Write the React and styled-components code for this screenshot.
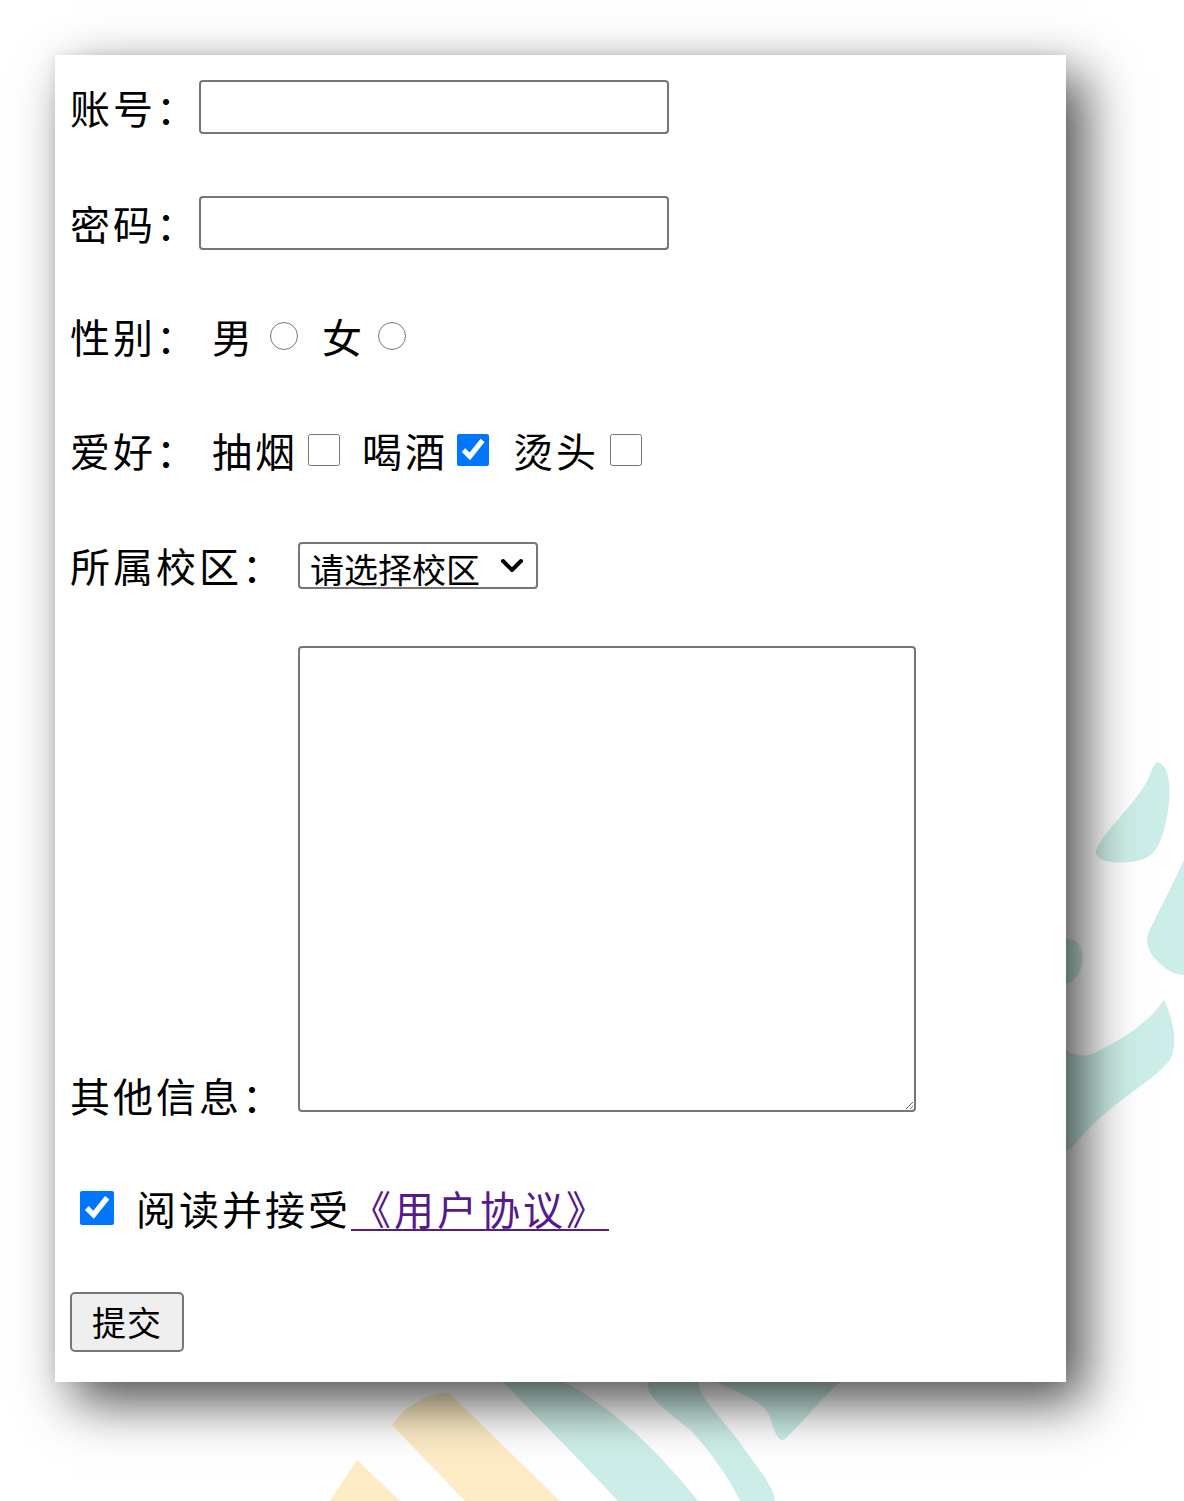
import styled, { createGlobalStyle } from "styled-components";

const GlobalStyle = createGlobalStyle`
  html, body {
    margin: 0;
    padding: 0;
    background: #ffffff;
  }
  body {
    font-family: "Noto Sans CJK SC", "Noto Sans", sans-serif;
    color: #000;
  }
`;

const Page = styled.div`
  position: relative;
  width: 1184px;
  height: 1501px;
  overflow: hidden;
  background: #fff;
`;

// decorative swooshes behind the card
const Watermark = styled.svg`
  position: absolute;
  left: 0;
  top: 0;
  width: 1184px;
  height: 1501px;
  z-index: 0;
`;

const Card = styled.form`
  position: relative;
  z-index: 1;
  margin: 55px 0 0 55px;
  width: 1011px;
  box-sizing: border-box;
  padding: 22px 0 30px 15px;
  background: #fff;
  box-shadow: 18px 20px 50px rgba(0, 0, 0, 0.7), -2px -2px 8px rgba(0, 0, 0, 0.06);
`;

const Row = styled.div`
  display: flex;
  align-items: center;
  height: 60px;
  margin-top: ${({ $mt }) => $mt || 0}px;
  font-size: 40px;
  line-height: 60px;
  letter-spacing: 3px;
`;

const BlockRow = styled.div`
  margin-top: ${({ $mt }) => $mt || 0}px;
  font-size: 40px;
  line-height: 50px;
  letter-spacing: 3px;
`;

const Label = styled.span`
  white-space: nowrap;
`;

const Option = styled.span`
  margin-left: ${({ $ml }) => $ml || 0}px;
  white-space: nowrap;
`;

const TextInput = styled.input`
  box-sizing: border-box;
  width: 470px;
  height: 54px;
  margin: 0 0 0 ${({ $ml }) => $ml || 0}px;
  border: 2px solid #767676;
  border-radius: 4px;
  font-size: 32px;
  padding: 2px 6px;
`;

const Radio = styled.input`
  width: 28px;
  height: 28px;
  margin: 0 0 0 ${({ $ml }) => $ml || 0}px;
`;

const Check = styled.input`
  width: ${({ $size }) => $size || 32}px;
  height: ${({ $size }) => $size || 32}px;
  margin: 0 0 0 ${({ $ml }) => $ml || 0}px;
  accent-color: #0075ff;
`;

const SelectWrap = styled.span`
  position: relative;
  display: inline-flex;
  margin-left: 13px;
`;

const Select = styled.select`
  box-sizing: border-box;
  width: 240px;
  height: 47px;
  border: 2px solid #767676;
  border-radius: 4px;
  background: #fff;
  appearance: none;
  font-family: "Noto Sans CJK SC", sans-serif;
  font-size: 34px;
  letter-spacing: 0;
  color: #000;
  padding: 0 40px 0 10px;
`;

const Chevron = styled.svg`
  position: absolute;
  right: 14px;
  top: 16px;
  width: 24px;
  height: 16px;
  pointer-events: none;
`;

const TextArea = styled.textarea`
  box-sizing: border-box;
  width: 618px;
  height: 466px;
  margin: 0 0 0 13px;
  border: 2px solid #767676;
  border-radius: 4px;
  vertical-align: baseline;
  font-size: 32px;
`;

const AgreeText = styled.span`
  margin-left: 22px;
  white-space: nowrap;
`;

const Link = styled.a`
  color: #551a8b;
  text-decoration: underline;
  text-underline-offset: 4px;
  text-decoration-thickness: 2px;
`;

const Submit = styled.button`
  box-sizing: border-box;
  width: 114px;
  height: 60px;
  padding: 0;
  border: 2px solid #767676;
  border-radius: 5px;
  background: #efefef;
  font-family: "Noto Sans CJK SC", sans-serif;
  font-size: 34px;
  letter-spacing: 1px;
  line-height: 1;
  color: #000;
`;

const Swooshes = () => (
  <Watermark viewBox="0 0 1184 1501">
    {/* right side */}
    <path
      d="M1160 763 C1172 770 1172 800 1164 830 C1158 852 1150 860 1130 862 C1110 864 1094 860 1096 850 C1104 830 1140 800 1150 775 C1153 766 1156 760 1160 763 Z"
      fill="#cdeee8"
    />
    <path
      d="M1184 860 C1175 880 1162 905 1152 925 C1146 935 1145 945 1152 955 C1162 968 1174 975 1184 975 Z"
      fill="#cdeee8"
    />
    <path
      d="M1164 1000 C1174 1020 1178 1045 1170 1060 C1150 1085 1110 1100 1070 1150 L1060 1150 L1060 1045 C1070 1055 1085 1060 1100 1050 C1130 1035 1150 1020 1164 1000 Z"
      fill="#cdeee8"
    />
    <path d="M1060 940 C1075 935 1085 945 1082 965 C1078 980 1068 985 1060 985 Z" fill="#cdeee8" />
    {/* bottom */}
    <path
      d="M392 1425 C405 1405 430 1392 449 1393 L560 1501 L465 1501 Z"
      fill="#fdecc6"
    />
    <path d="M357 1460 L400 1501 L330 1501 Z" fill="#fdecc6" />
    <path
      d="M503 1382 L564 1382 C600 1400 650 1440 698 1501 L618 1501 C580 1460 540 1420 503 1382 Z"
      fill="#cdeee8"
    />
    <path
      d="M648 1382 L698 1382 C700 1400 725 1420 745 1450 C760 1470 775 1490 775 1501 L740 1501 C730 1480 710 1450 690 1430 C660 1405 645 1395 648 1382 Z"
      fill="#cdeee8"
    />
    <path
      d="M717 1382 L840 1382 C820 1400 800 1425 786 1438 C778 1445 774 1430 770 1418 C765 1400 740 1395 717 1382 Z"
      fill="#cdeee8"
    />
  </Watermark>
);

export default function App() {
  return (
    <Page>
      <GlobalStyle />
      <Swooshes />
      <Card onSubmit={(e) => e.preventDefault()}>
        <Row>
          <Label>账号：</Label>
          <TextInput type="text" />
        </Row>

        <Row $mt={56}>
          <Label>密码：</Label>
          <TextInput type="password" />
        </Row>

        <Row $mt={53}>
          <Label>性别：</Label>
          <Option $ml={13}>男</Option>
          <Radio type="radio" name="sex" $ml={15} />
          <Option $ml={24}>女</Option>
          <Radio type="radio" name="sex" $ml={13} />
        </Row>

        <Row $mt={54}>
          <Label>爱好：</Label>
          <Option $ml={13}>抽烟</Option>
          <Check type="checkbox" $ml={10} />
          <Option $ml={22}>喝酒</Option>
          <Check type="checkbox" defaultChecked $ml={9} />
          <Option $ml={24}>烫头</Option>
          <Check type="checkbox" $ml={11} />
        </Row>

        <Row $mt={55}>
          <Label>所属校区：</Label>
          <SelectWrap>
            <Select defaultValue="">
              <option value="">请选择校区</option>
              <option value="a">北京校区</option>
              <option value="b">上海校区</option>
            </Select>
            <Chevron viewBox="0 0 24 16">
              <path d="M3 3 L12 12 L21 3" fill="none" stroke="#000" strokeWidth="4" strokeLinecap="round" strokeLinejoin="round" />
            </Chevron>
          </SelectWrap>
        </Row>

        <BlockRow $mt={51}>
          <Label>其他信息：</Label>
          <TextArea />
        </BlockRow>

        <Row $mt={58}>
          <Check type="checkbox" defaultChecked $size={34} $ml={10} />
          <AgreeText>
            阅读并接受<Link href="#">《用户协议》</Link>
          </AgreeText>
        </Row>

        <Row $mt={54}>
          <Submit type="submit">提交</Submit>
        </Row>
      </Card>
    </Page>
  );
}
